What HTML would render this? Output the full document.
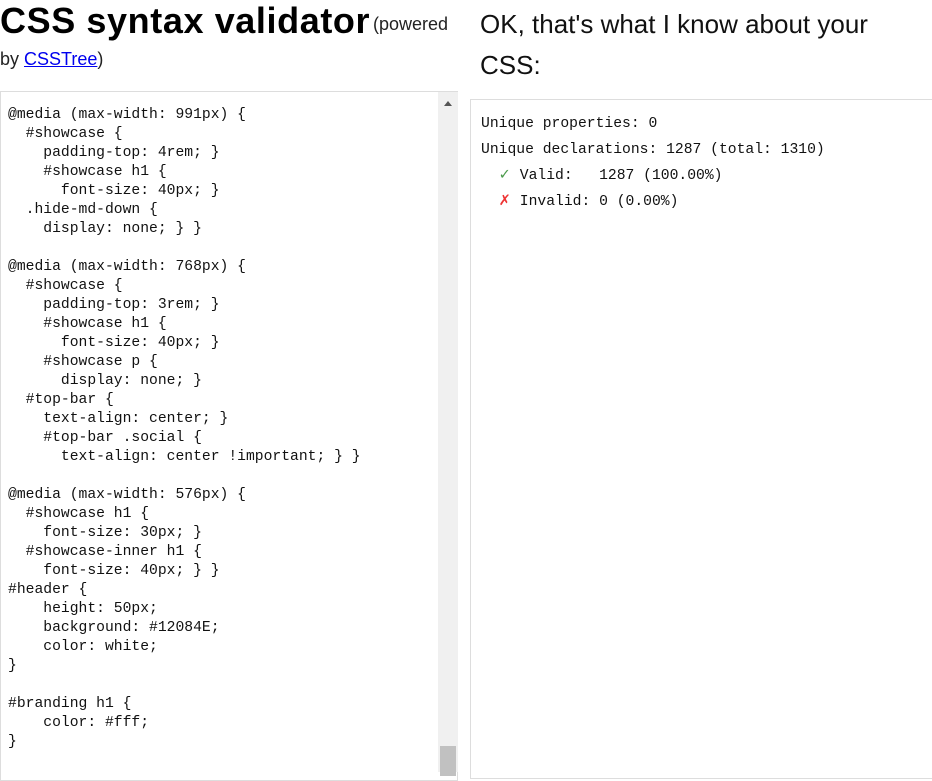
<!DOCTYPE html>
<html><head><style>
body{margin:0;width:932px;height:767px;overflow:hidden;background:#fff;font-family:"Liberation Sans",sans-serif;color:#000;position:relative}
.h1{position:absolute;left:0;top:0;font-size:36px;font-weight:bold;line-height:42px;letter-spacing:0.6px}
.pw{position:absolute;left:373px;top:14px;font-size:18px;color:#222}
.by{position:absolute;left:0;top:49px;font-size:18px;color:#222}
.by a{color:#00e;text-decoration:underline}
.ok{position:absolute;left:480px;top:4px;font-size:26px;line-height:41px;color:#111;width:430px}
.ta{position:absolute;left:0;top:91px;width:458px;height:690px;border:1px solid #ddd;box-sizing:border-box;overflow:hidden}
pre{margin:0;position:absolute;left:7px;top:14px;font-family:"Liberation Mono",monospace;font-size:14.7px;line-height:19px;color:#111}
.sb{position:absolute;left:438px;top:92px;width:20px;height:680px;background:#f0f0f0}
.sb .up{position:absolute;left:6px;top:9px;width:0;height:0;border-left:4px solid transparent;border-right:4px solid transparent;border-bottom:5px solid #555}
.thumb{position:absolute;left:440px;top:746px;width:16px;height:30px;background:#c1c1c1}
.rp{position:absolute;left:470px;top:99px;width:470px;height:680px;border:1px solid #ddd;box-sizing:border-box}
.rp pre{left:10px;top:11px;line-height:26px;font-size:14.7px}
.g{color:#4a9a4a}.r{color:#e33}
</style></head><body>
<div class="h1">CSS syntax validator</div>
<div class="pw">(powered</div>
<div class="by">by <a>CSSTree</a>)</div>
<div class="ok">OK, that's what I know about your CSS:</div>
<div class="ta"><pre>@media (max-width: 991px) {
  #showcase {
    padding-top: 4rem; }
    #showcase h1 {
      font-size: 40px; }
  .hide-md-down {
    display: none; } }

@media (max-width: 768px) {
  #showcase {
    padding-top: 3rem; }
    #showcase h1 {
      font-size: 40px; }
    #showcase p {
      display: none; }
  #top-bar {
    text-align: center; }
    #top-bar .social {
      text-align: center !important; } }

@media (max-width: 576px) {
  #showcase h1 {
    font-size: 30px; }
  #showcase-inner h1 {
    font-size: 40px; } }
#header {
    height: 50px;
    background: #12084E;
    color: white;
}

#branding h1 {
    color: #fff;
}</pre></div>
<div class="sb"><div class="up"></div></div>
<div class="thumb"></div>
<div class="rp"><pre>Unique properties: 0
Unique declarations: 1287 (total: 1310)
  <span class="g">✓</span> Valid:   1287 (100.00%)
  <span class="r">✗</span> Invalid: 0 (0.00%)</pre></div>
</body></html>
